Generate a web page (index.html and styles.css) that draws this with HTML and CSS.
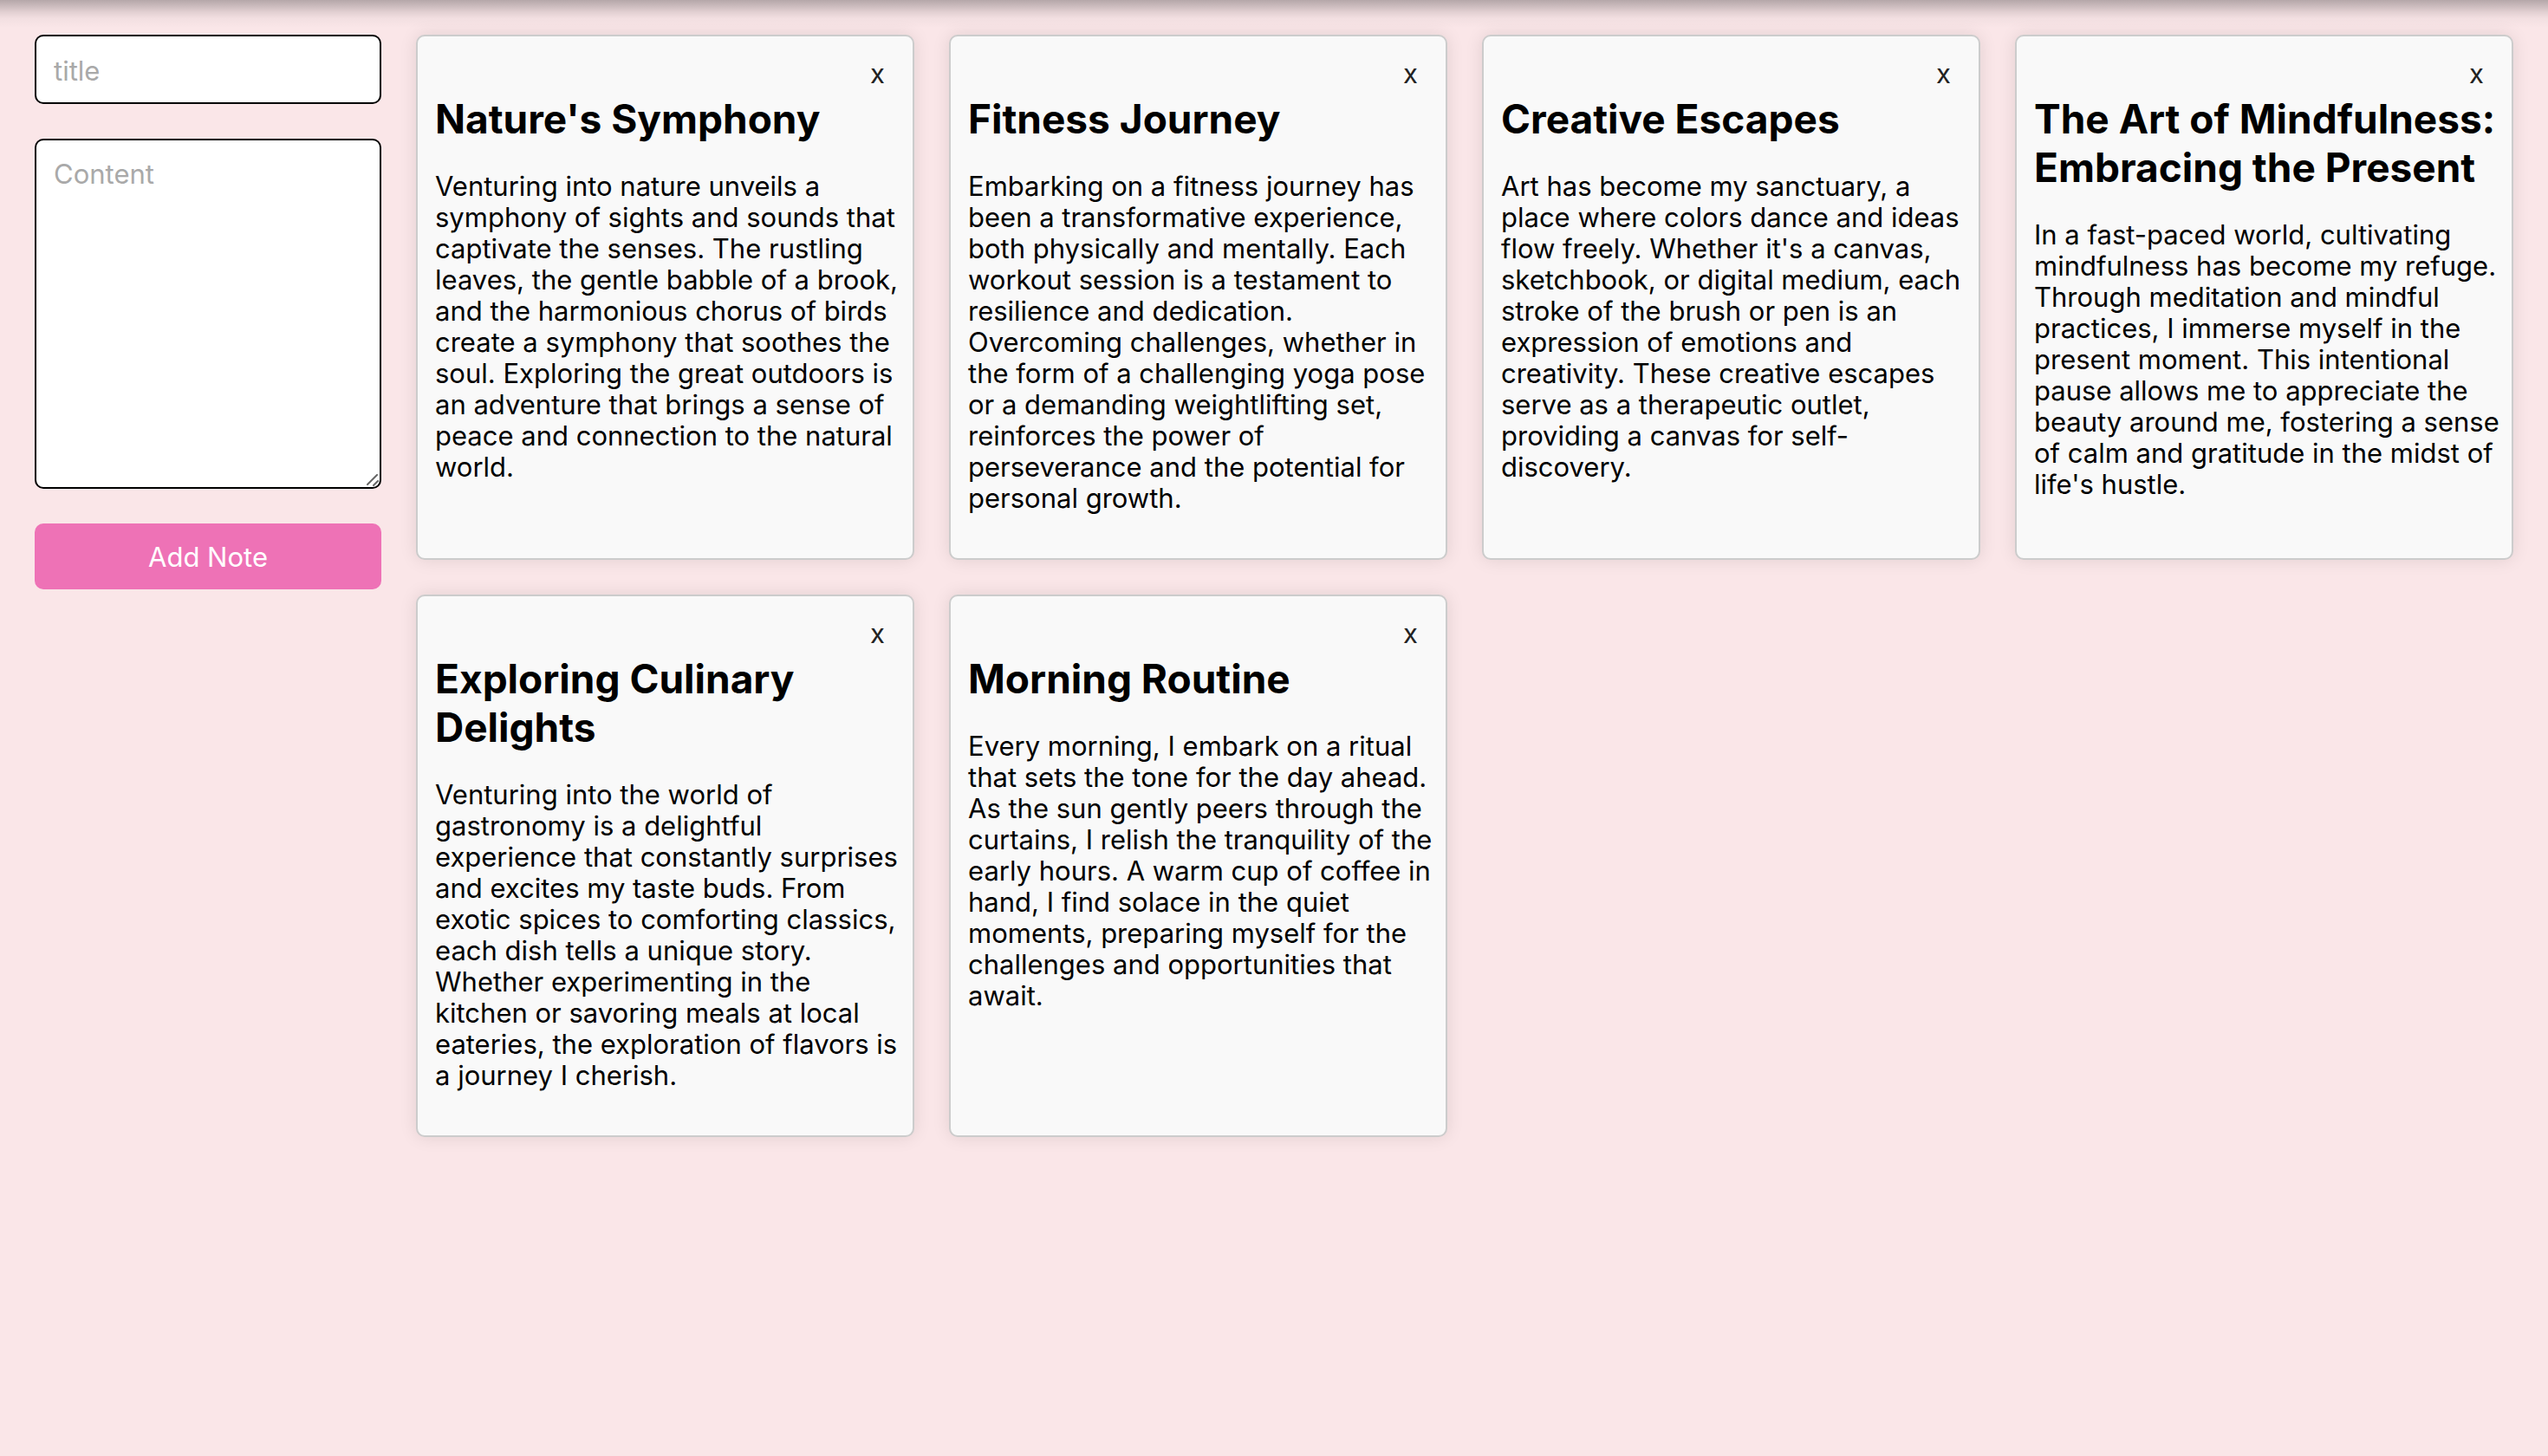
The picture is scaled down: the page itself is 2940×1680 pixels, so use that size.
FILE: index.html
```html
<!DOCTYPE html>
<html lang="en">
<head>
<meta charset="utf-8">
<title>Notes</title>
<link rel="stylesheet" href="styles.css">
</head>
<body>
<main class="app">
  <form class="note-form">
    <input class="field" type="text" placeholder="title" aria-label="Title">
    <textarea class="field field-content" placeholder="Content" aria-label="Content"></textarea>
    <button class="add-button" type="button">Add Note</button>
  </form>
  <section class="notes" aria-label="Notes">
    <article class="note">
      <div class="note-header"><button class="delete-button" type="button" aria-label="Delete note">x</button></div>
      <h2 class="note-title">Nature's Symphony</h2>
      <p class="note-text">Venturing into nature unveils a<br>symphony of sights and sounds that<br>captivate the senses. The rustling<br>leaves, the gentle babble of a brook,<br>and the harmonious chorus of birds<br>create a symphony that soothes the<br>soul. Exploring the great outdoors is<br>an adventure that brings a sense of<br>peace and connection to the natural<br>world.</p>
    </article>
    <article class="note">
      <div class="note-header"><button class="delete-button" type="button" aria-label="Delete note">x</button></div>
      <h2 class="note-title">Fitness Journey</h2>
      <p class="note-text">Embarking on a fitness journey has<br>been a transformative experience,<br>both physically and mentally. Each<br>workout session is a testament to<br>resilience and dedication.<br>Overcoming challenges, whether in<br>the form of a challenging yoga pose<br>or a demanding weightlifting set,<br>reinforces the power of<br>perseverance and the potential for<br>personal growth.</p>
    </article>
    <article class="note">
      <div class="note-header"><button class="delete-button" type="button" aria-label="Delete note">x</button></div>
      <h2 class="note-title">Creative Escapes</h2>
      <p class="note-text">Art has become my sanctuary, a<br>place where colors dance and ideas<br>flow freely. Whether it's a canvas,<br>sketchbook, or digital medium, each<br>stroke of the brush or pen is an<br>expression of emotions and<br>creativity. These creative escapes<br>serve as a therapeutic outlet,<br>providing a canvas for self-<br>discovery.</p>
    </article>
    <article class="note">
      <div class="note-header"><button class="delete-button" type="button" aria-label="Delete note">x</button></div>
      <h2 class="note-title">The Art of Mindfulness:<br>Embracing the Present</h2>
      <p class="note-text">In a fast-paced world, cultivating<br>mindfulness has become my refuge.<br>Through meditation and mindful<br>practices, I immerse myself in the<br>present moment. This intentional<br>pause allows me to appreciate the<br>beauty around me, fostering a sense<br>of calm and gratitude in the midst of<br>life's hustle.</p>
    </article>
    <article class="note">
      <div class="note-header"><button class="delete-button" type="button" aria-label="Delete note">x</button></div>
      <h2 class="note-title">Exploring Culinary<br>Delights</h2>
      <p class="note-text">Venturing into the world of<br>gastronomy is a delightful<br>experience that constantly surprises<br>and excites my taste buds. From<br>exotic spices to comforting classics,<br>each dish tells a unique story.<br>Whether experimenting in the<br>kitchen or savoring meals at local<br>eateries, the exploration of flavors is<br>a journey I cherish.</p>
    </article>
    <article class="note">
      <div class="note-header"><button class="delete-button" type="button" aria-label="Delete note">x</button></div>
      <h2 class="note-title">Morning Routine</h2>
      <p class="note-text">Every morning, I embark on a ritual<br>that sets the tone for the day ahead.<br>As the sun gently peers through the<br>curtains, I relish the tranquility of the<br>early hours. A warm cup of coffee in<br>hand, I find solace in the quiet<br>moments, preparing myself for the<br>challenges and opportunities that<br>await.</p>
    </article>
  </section>
</main>
</body>
</html>
```
FILE: styles.css
```css
* {
  box-sizing: border-box;
}

body {
  margin: 0;
  min-height: 100vh;
  background: linear-gradient(#b5a7a9, #cbbbbd 7px, #e2d0d2 14px, #f2dfe1 21px, #fae6e8 32px) #fae6e8;
  color: #000;
  font-family: Inter, "Liberation Sans", sans-serif;
  font-size: 31px;
  line-height: 36px;
}

.app {
  display: grid;
  grid-template-columns: 400px 1fr;
  gap: 40px;
  padding: 40px;
}

.note-form {
  display: flex;
  flex-direction: column;
  gap: 40px;
}

.field {
  display: block;
  width: 100%;
  height: 80px;
  padding: 21px 20px 19px;
  border: 2px solid #000;
  border-radius: 10px;
  background: #fff;
  color: #000;
  font: inherit;
}

.field-content {
  height: 404px;
  resize: vertical;
}

.field-content::-webkit-resizer {
  background: url("data:image/svg+xml,%3Csvg xmlns='http://www.w3.org/2000/svg' width='15' height='15' fill='none' stroke='%23666' stroke-width='2' stroke-linecap='round'%3E%3Cpath d='M1 12 12 1M8 13l5-5'/%3E%3C/svg%3E") no-repeat right bottom;
}

.field::placeholder {
  color: #a9a9a9;
}

.add-button {
  padding: 21px 20px 19px;
  border: 0;
  border-radius: 10px;
  background: #ee72b6;
  color: #fff;
  font: inherit;
}

.notes {
  display: grid;
  grid-template-columns: repeat(4, minmax(0, 1fr));
  gap: 40px;
}

.note {
  padding: 20px;
  border: 2px solid #ccc;
  border-radius: 10px;
  background: #f9f9f9;
  box-shadow: 0 0 20px rgba(0, 0, 0, 0.1);
  white-space: nowrap;
}

.note-header {
  display: flex;
  justify-content: flex-end;
}

.delete-button {
  padding: 5px 12px 6px;
  border: 0;
  background: none;
  color: #222;
  font: inherit;
}

.note-title {
  margin: 0 0 32px;
  font-size: 46px;
  font-weight: 700;
  line-height: 56px;
}

.note-text {
  margin: 0 0 31px;
}
```
